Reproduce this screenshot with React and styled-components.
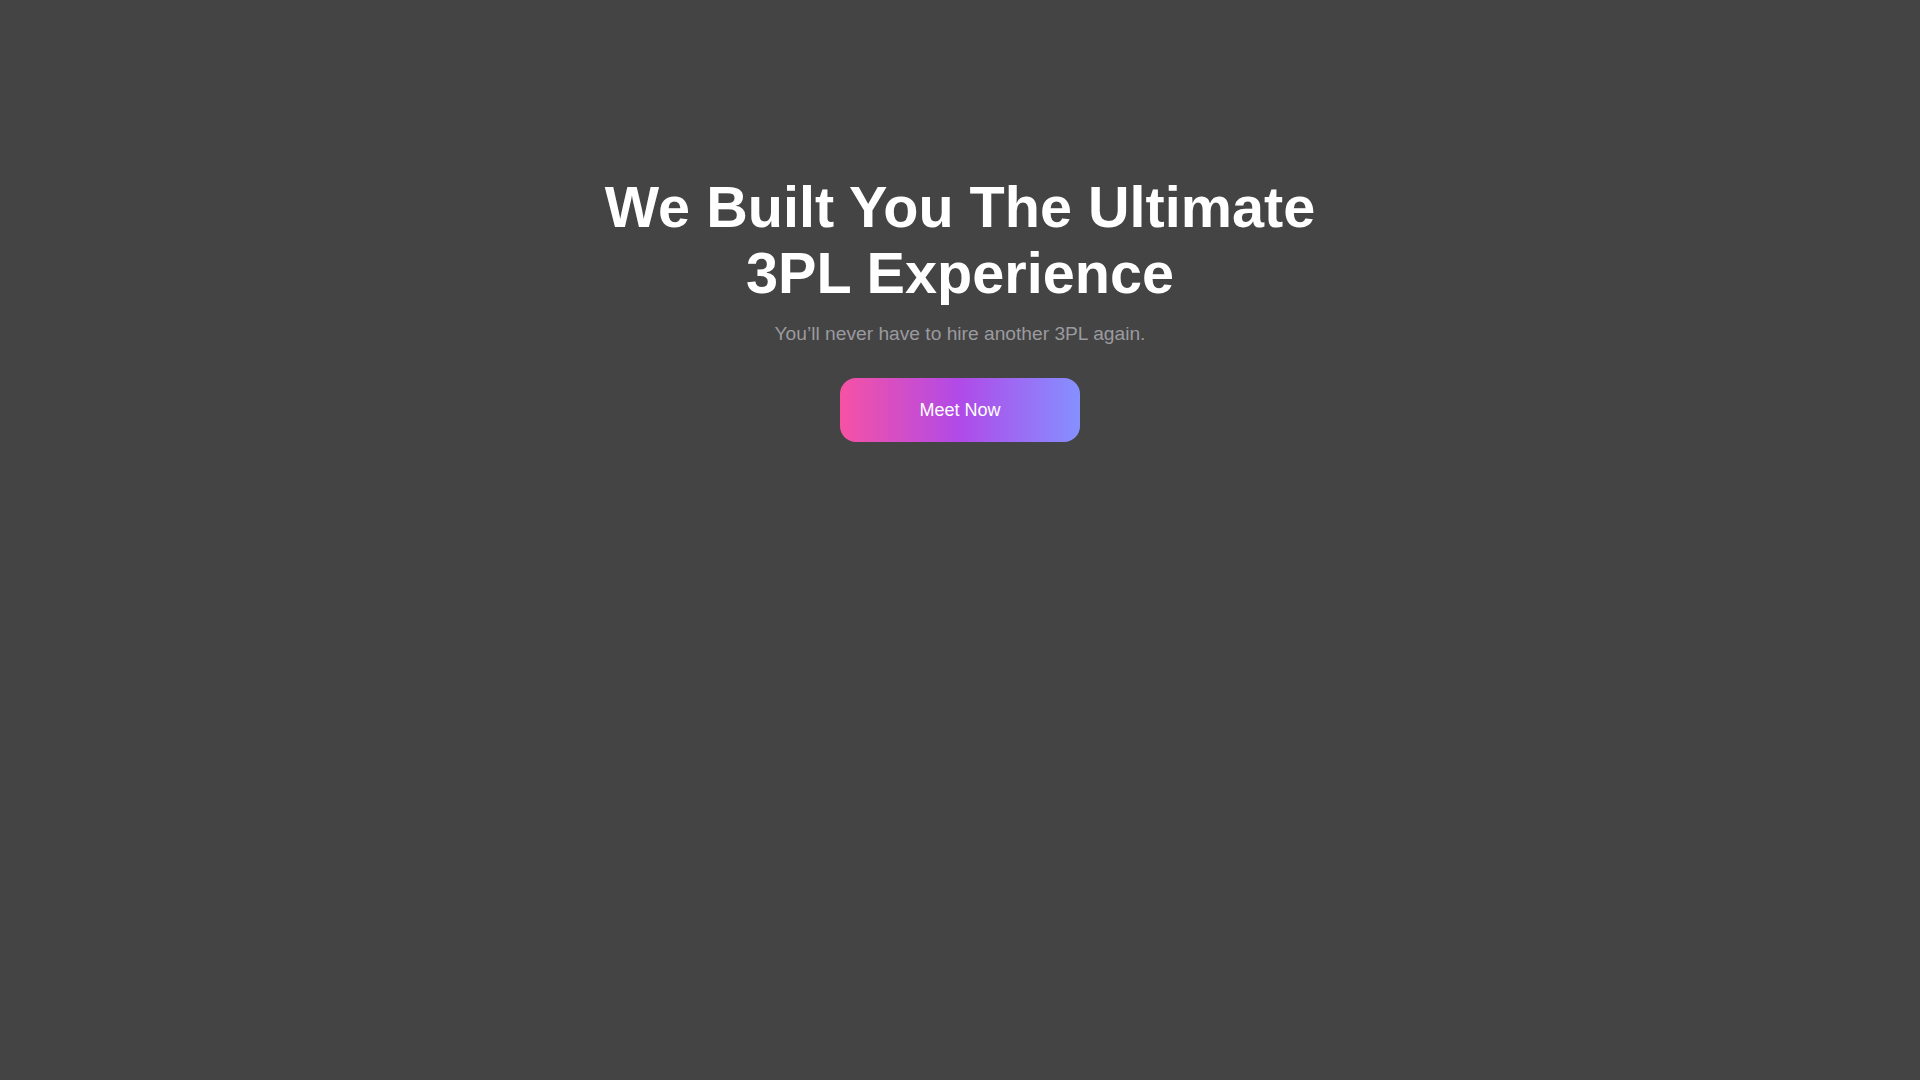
import React from 'react'
import styled, { createGlobalStyle } from 'styled-components'

const GlobalStyle = createGlobalStyle`
  html, body {
    margin: 0;
    padding: 0;
    background: #444444;
    font-family: "Liberation Sans", Arial, sans-serif;
    overflow: hidden;
  }
`

const Viewport = styled.div`
  width: 100vw;
  height: 100vh;
  overflow: auto;
  background: #444444;

  &::-webkit-scrollbar {
    width: 10px;
    height: 10px;
  }
  &::-webkit-scrollbar-track {
    background: #ffffff;
  }
  &::-webkit-scrollbar-thumb {
    background: #111111;
    border: 2px solid #ffffff;
    border-radius: 10px;
  }
  &::-webkit-scrollbar-corner {
    background: #0a0620;
  }
`

const Page = styled.div`
  width: 100vw;
  min-height: 36100px;
`

const Hero = styled.section`
  display: flex;
  flex-direction: column;
  align-items: center;
  text-align: center;
  padding-top: 174px;
`

const Title = styled.h1`
  margin: 0;
  max-width: 780px;
  color: #ffffff;
  font-size: 57.6px;
  font-weight: 700;
  line-height: 1.15;
`

const Subtitle = styled.p`
  margin: 14px 0 0;
  color: #9a9a9f;
  font-size: 19.2px;
  line-height: 1.5;
`

const MeetButton = styled.a`
  display: flex;
  align-items: center;
  justify-content: center;
  width: 240px;
  height: 64px;
  margin-top: 29px;
  border-radius: 16px;
  background: linear-gradient(90deg, #f652a4 0%, #b04ae8 50%, #8590ff 100%);
  color: #ffffff;
  font-size: 18px;
  text-decoration: none;
  cursor: pointer;
`

export default function App() {
  return (
    <>
      <GlobalStyle />
      <Viewport>
        <Page>
          <Hero>
            <Title>We Built You The Ultimate 3PL Experience</Title>
            <Subtitle>You’ll never have to hire another 3PL again.</Subtitle>
            <MeetButton href="#">Meet Now</MeetButton>
          </Hero>
        </Page>
      </Viewport>
    </>
  )
}
